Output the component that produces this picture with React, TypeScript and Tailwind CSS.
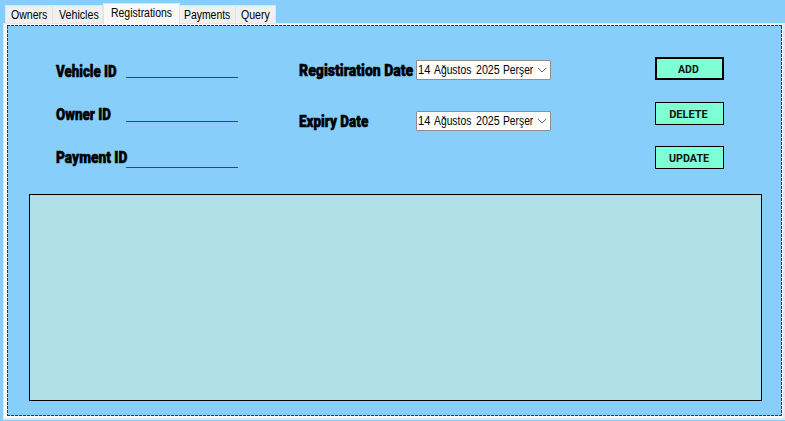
import { useLayoutEffect, useRef, useState } from "react";
import clsx from "clsx";

// Squeezes one line of text horizontally so that it fills the given width.
function Fit({ width, className, children }: { width: number; className?: string; children: string }) {
  const ref = useRef<HTMLSpanElement>(null);
  const [scale, setScale] = useState(1);
  useLayoutEffect(() => {
    if (ref.current) setScale(width / ref.current.offsetWidth);
  }, [width]);
  return (
    <span className="block" style={{ width }}>
      <span
        ref={ref}
        className={clsx("inline-block origin-left whitespace-nowrap", className)}
        style={{ transform: `scaleX(${scale})` }}
      >
        {children}
      </span>
    </span>
  );
}

function Tab({ label, width, className, active }: { label: string; width: number; className: string; active?: boolean }) {
  return (
    <div
      className={clsx(
        "box-border border border-b-0 border-[#e3e3e3] text-[12px] leading-[14px]",
        active ? "z-10 h-[21px] bg-[#f9f9f9] pt-[2px]" : "h-[18px] bg-[#f0f0f0] pt-[2px]",
        className,
      )}
    >
      <Fit width={width}>{label}</Fit>
    </div>
  );
}

function Label({ children, width }: { children: string; width: number }) {
  return (
    <Fit
      width={width}
      className="font-['Roboto','Liberation_Sans',sans-serif] text-[17px] leading-5 font-black [-webkit-text-stroke:0.6px_#000]"
    >
      {children}
    </Fit>
  );
}

function DatePicker() {
  return (
    <div className="flex h-5 w-[135px] items-center justify-between rounded-[1px] border border-[#8f8f8f] bg-white pr-[3px] pl-px">
      <div className="flex w-[116px] overflow-hidden text-[12px] leading-[16px]">
        <div className="w-4"><Fit width={12}>14</Fit></div>
        <div className="w-[42px]"><Fit width={37}>Ağustos</Fit></div>
        <div className="w-[27px]"><Fit width={24}>2025</Fit></div>
        <Fit width={30}>Perşer</Fit>
      </div>
      <svg className="h-[6px] w-[10px]" viewBox="0 0 10 6" fill="none" stroke="#606060" strokeWidth="1">
        <path d="M1 1 L5 5 L9 1" />
      </svg>
    </div>
  );
}

function Button({ label, width, focused }: { label: string; width: number; focused?: boolean }) {
  return (
    <button
      className={clsx(
        "flex h-[23px] w-[69px] items-center justify-center border-black bg-[#7fffd4] pt-[2px] pr-[2px] font-['Roboto','Liberation_Sans',sans-serif] text-[11px] leading-[14px] font-bold text-[#101010]",
        focused ? "border-2" : "border",
      )}
    >
      <Fit width={width}>{label}</Fit>
    </button>
  );
}

function Rule() {
  return <div className="h-px w-[112px] bg-[#2f4f4f]" />;
}

const hDash = "h-px shrink-0 bg-[repeating-linear-gradient(90deg,#004b78_0_3px,#87cefa_3px_4px)]";
const vDash = "w-px shrink-0 bg-[repeating-linear-gradient(180deg,#004b78_0_3px,#87cefa_3px_4px)]";

export default function App() {
  return (
    <div className="flex h-[421px] w-[785px] flex-col overflow-hidden bg-[#87cefa] font-['Liberation_Sans',sans-serif] text-black">
      <div className="flex h-[23px] shrink-0 items-end pl-[5px]">
        <Tab label="Owners" width={36} className="w-[48px] pl-[5px]" />
        <Tab label="Vehicles" width={40} className="w-[50px] border-l-0 pl-[6px]" />
        <Tab label="Registrations" width={61} active className="-mb-px w-[77px] pl-[7px]" />
        <Tab label="Payments" width={46} className="w-[56px] border-l-0 pl-[4px]" />
        <Tab label="Query" width={29} className="w-[40px] border-l-0 pl-[5px]" />
      </div>
      <div className="ml-[3px] flex h-[397px] w-[782px] flex-col border-t border-r-2 border-b-2 border-l border-[#e6e6e6] bg-[#f9f9f9] pt-px pr-px pb-[2px] pl-[3px]">
        <div className="flex h-[391px] w-[775px] flex-col bg-[#87cefa]">
          <div className={hDash} />
          <div className="flex min-h-0 flex-1">
            <div className={vDash} />
            <div className="flex min-w-0 flex-1 flex-col">
              <div className="flex h-[168px]">
                <div className="flex w-[243px] flex-col pl-[48px]">
                  <div className="flex h-[52px] items-end">
                    <div className="-mb-[6px] w-[70px]"><Label width={61}>Vehicle ID</Label></div>
                    <Rule />
                  </div>
                  <div className="flex h-[44px] items-end">
                    <div className="-mb-[5px] w-[70px]"><Label width={55}>Owner ID</Label></div>
                    <Rule />
                  </div>
                  <div className="flex h-[46px] items-end">
                    <div className="-mb-[2px] w-[70px]"><Label width={71}>Payment ID</Label></div>
                    <Rule />
                  </div>
                </div>
                <div className="w-[300px] pt-[34px] pl-[48px]">
                  <div className="flex h-[51px] items-start">
                    <div className="-mt-px w-[117px]"><Label width={114}>Registiration Date</Label></div>
                    <DatePicker />
                  </div>
                  <div className="flex items-start">
                    <div className="-mt-px w-[117px]"><Label width={69}>Expiry Date</Label></div>
                    <DatePicker />
                  </div>
                </div>
                <div className="flex flex-col pt-[31px] pl-[104px]">
                  <Button label="ADD" width={21} focused />
                  <div className="h-[22px]" />
                  <Button label="DELETE" width={39} />
                  <div className="h-[21px]" />
                  <Button label="UPDATE" width={40} />
                </div>
              </div>
              <div className="ml-[21px] h-[207px] w-[733px] border border-black bg-[#b0e0e6]" />
            </div>
            <div className={vDash} />
          </div>
          <div className={hDash} />
        </div>
      </div>
    </div>
  );
}
